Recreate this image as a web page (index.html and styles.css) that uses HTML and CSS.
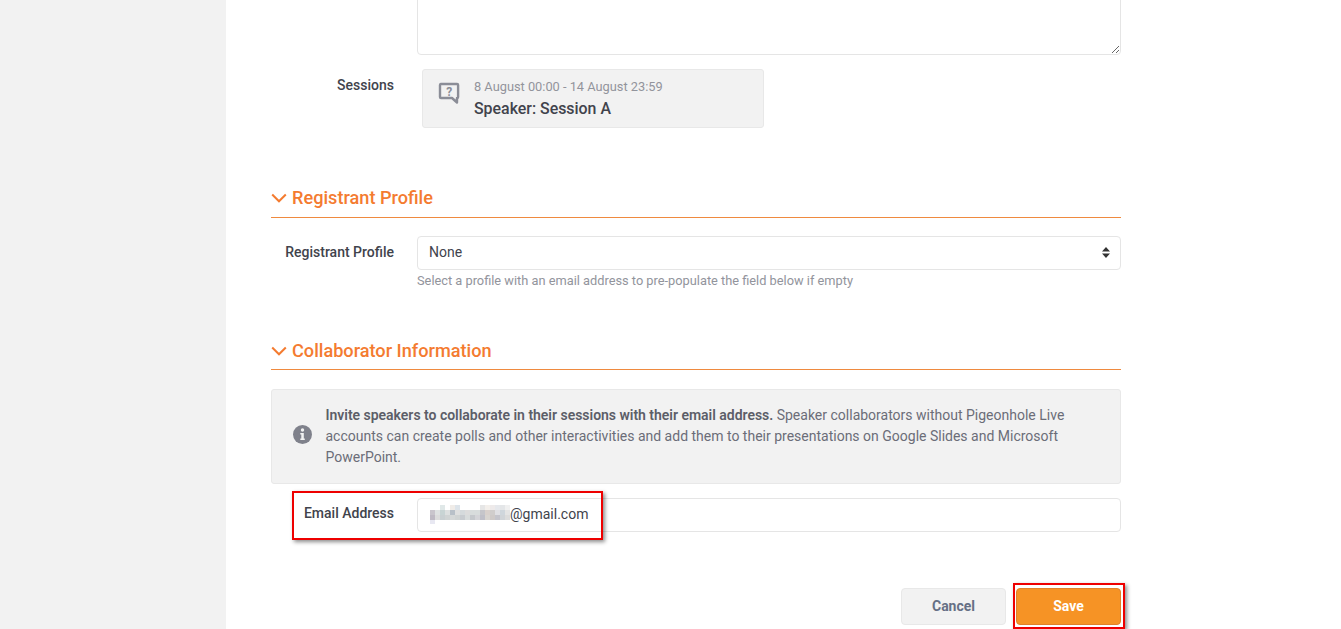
FILE: index.html
```html
<!DOCTYPE html>
<html lang="en">
<head>
<meta charset="utf-8">
<title>Edit collaborator</title>
<link rel="stylesheet" href="styles.css">
</head>
<body>
<div class="page">
  <aside class="sidebar"></aside>
  <main class="main">
    <form class="form">
      <div class="top-field"><textarea class="textarea"></textarea></div>

      <div class="row sessions-row">
        <div class="label">Sessions</div>
        <div class="session-card">
          <svg class="session-icon" width="23" height="24" viewBox="0 0 23 24" fill="none">
            <path d="M2.900 2H19.100a1 1 0 0 1 1 1v12a1 1 0 0 1-1 1H19v4.500L14 16H3a1 1 0 0 1-1-1V3a1 1 0 0 1 1-1z" stroke="#8b8d97" stroke-width="2.400" stroke-linejoin="round"/>
            <text x="11.300" y="13.500" text-anchor="middle" class="session-q">?</text>
          </svg>
          <div class="session-text">
            <div class="session-date">8 August 00:00 - 14 August 23:59</div>
            <div class="session-name">Speaker: Session A</div>
          </div>
        </div>
      </div>

      <section class="section registrant">
        <h2 class="section-title">
          <svg class="chevron" width="16" height="10" viewBox="0 0 16 10" fill="none"><path d="M1.200 1.500L8 8.300l6.800-6.800" stroke="#f47b30" stroke-width="2"/></svg>
          Registrant Profile
        </h2>
        <div class="row select-row">
          <div class="label">Registrant Profile</div>
          <div class="field">
            <div class="select-wrap">
              <select class="select"><option>None</option></select>
              <svg class="select-arrows" width="8" height="11" viewBox="0 0 8 11"><path d="M4 0l4 4.500H0zM4 11L0 6.500h8z" fill="#333"/></svg>
            </div>
            <div class="help">Select a profile with an email address to pre-populate the field below if empty</div>
          </div>
        </div>
      </section>

      <section class="section collaborator">
        <h2 class="section-title">
          <svg class="chevron" width="16" height="10" viewBox="0 0 16 10" fill="none"><path d="M1.200 1.500L8 8.300l6.800-6.800" stroke="#f47b30" stroke-width="2"/></svg>
          Collaborator Information
        </h2>
        <div class="info-box">
          <svg class="info-icon" width="19" height="19" viewBox="0 0 19 19">
            <circle cx="9.500" cy="9.500" r="9.500" fill="#7f818b"/>
            <circle cx="9.500" cy="5" r="1.700" fill="#f2f2f2"/>
            <path d="M7.300 8h3.500v5.400h1v1.500H7.300v-1.500h1v-3.900h-1z" fill="#f2f2f2"/>
          </svg>
          <p class="info-text"><strong>Invite speakers to collaborate in their sessions with their email address.</strong> Speaker collaborators without Pigeonhole Live accounts can create polls and other interactivities and add them to their presentations on Google Slides and Microsoft PowerPoint.</p>
        </div>
        <div class="row email-row">
          <div class="label">Email Address</div>
          <div class="email-input">
            <svg class="blur-name" width="80" height="19" viewBox="0 0 80 19" aria-hidden="true">
              <rect x="10" y="0" width="5" height="5" fill="#e0e8e8"/><rect x="20" y="0" width="5" height="5" fill="#f0ece8"/><rect x="25" y="0" width="5" height="5" fill="#dde4ea"/><rect x="50" y="0" width="5" height="5" fill="#e6e6e6"/><rect x="55" y="0" width="5" height="5" fill="#f3efeb"/><rect x="60" y="0" width="5" height="5" fill="#eeeaea"/><rect x="65" y="0" width="5" height="5" fill="#e6e8ec"/><rect x="70" y="0" width="5" height="5" fill="#e4e6e8"/><rect x="75" y="0" width="5" height="5" fill="#f0f0f0"/>
              <rect x="0" y="5" width="5" height="5" fill="#c9c5cc"/><rect x="5" y="5" width="5" height="5" fill="#dfe2e2"/><rect x="10" y="5" width="5" height="5" fill="#c8d4d4"/><rect x="15" y="5" width="5" height="5" fill="#dde0e0"/><rect x="20" y="5" width="5" height="5" fill="#b8c0c8"/><rect x="25" y="5" width="5" height="5" fill="#dfe0e0"/><rect x="30" y="5" width="5" height="5" fill="#d5dadc"/><rect x="35" y="5" width="5" height="5" fill="#dcdcdc"/><rect x="40" y="5" width="5" height="5" fill="#d8dcdc"/><rect x="45" y="5" width="5" height="5" fill="#d8dcdc"/><rect x="50" y="5" width="5" height="5" fill="#c5c5ca"/><rect x="55" y="5" width="5" height="5" fill="#d8d0cc"/><rect x="60" y="5" width="5" height="5" fill="#d0cdcc"/><rect x="65" y="5" width="5" height="5" fill="#e0e0e4"/><rect x="70" y="5" width="5" height="5" fill="#cfd6dc"/><rect x="75" y="5" width="5" height="5" fill="#e4e4e4"/>
              <rect x="0" y="10" width="5" height="5" fill="#bfbac4"/><rect x="5" y="10" width="5" height="5" fill="#dcdcdc"/><rect x="10" y="10" width="5" height="5" fill="#c9d0d2"/><rect x="15" y="10" width="5" height="5" fill="#d0d4d4"/><rect x="20" y="10" width="5" height="5" fill="#d5d8d8"/><rect x="25" y="10" width="5" height="5" fill="#d0d4d4"/><rect x="30" y="10" width="5" height="5" fill="#c8ccd0"/><rect x="35" y="10" width="5" height="5" fill="#d8dcdc"/><rect x="40" y="10" width="5" height="5" fill="#c5c8cc"/><rect x="45" y="10" width="5" height="5" fill="#d4d4d8"/><rect x="50" y="10" width="5" height="5" fill="#bfbfc8"/><rect x="55" y="10" width="5" height="5" fill="#d8d4d0"/><rect x="60" y="10" width="5" height="5" fill="#cfcac8"/><rect x="65" y="10" width="5" height="5" fill="#c5c5cc"/><rect x="70" y="10" width="5" height="5" fill="#d0d4d8"/><rect x="75" y="10" width="5" height="5" fill="#dcdcdc"/>
              <rect x="0" y="15" width="5" height="4" fill="#e8e8f2"/>
            </svg><span class="email-domain">@gmail.com</span>
          </div>
        </div>
      </section>

      <div class="actions">
        <button type="button" class="btn btn-cancel">Cancel</button>
        <button type="button" class="btn btn-save">Save</button>
      </div>
    </form>
  </main>
</div>
<div class="callout callout-email"></div>
<div class="callout callout-save"></div>
</body>
</html>
```

FILE: styles.css
```css
* { box-sizing: border-box; }
html, body { margin: 0; height: 629px; overflow: hidden; background: #fff; }
body { font-family: Roboto, "Liberation Sans", sans-serif; color: #41434c; font-size: 14px; position: relative; }

.page { display: flex; height: 629px; overflow: hidden; }
.sidebar { width: 226px; flex: none; background: #f2f2f2; }
.main { flex: 1; padding-left: 45px; }
.form { width: 850px; }

.top-field { padding-left: 146px; height: 55px; display: flex; align-items: flex-end; }
.textarea { display: block; width: 704px; height: 80px; flex: none; border: 1px solid #e5e5e5; border-radius: 4px; background: #fff; resize: both; margin: 0; outline: none; }

.row { display: flex; }
.label { width: 123px; flex: none; text-align: right; font-weight: 500; font-size: 14px; line-height: 20px; color: #41434c; }

.sessions-row { margin-top: 14px; }
.sessions-row .label { padding-top: 6px; }
.session-card { margin-left: 28px; width: 342px; height: 59px; background: #f2f2f2; border: 1px solid #e8e8e8; border-radius: 3px; display: flex; padding: 9px 0 0 15px; }
.session-icon { flex: none; margin-top: 3px; }
.session-q { font-family: Roboto, sans-serif; font-size: 12px; font-weight: 700; fill: #8b8d97; }
.session-text { margin-left: 13px; }
.session-date { font-size: 12.800px; line-height: 16px; color: #92949c; }
.session-name { font-size: 15.900px; font-weight: 500; line-height: 20px; margin-top: 4px; color: #41434c; }

.section-title { margin: 0; border-bottom: 1px solid #ef8a3f; display: flex; align-items: flex-start; gap: 5px; font-size: 18.150px; font-weight: 500; line-height: 24px; color: #f47b30; }
.chevron { margin-top: 7px; flex: none; }
.registrant { margin-top: 58px; }
.registrant .section-title { height: 32px; }
.collaborator { margin-top: 50px; }
.collaborator .section-title { height: 31px; }

.select-row { margin-top: 18px; }
.select-row .label { padding-top: 6px; }
.field { margin-left: 23px; width: 704px; }
.select-wrap { position: relative; }
.select { display: block; width: 100%; height: 34px; appearance: none; -webkit-appearance: none; border: 1px solid #e5e5e5; border-radius: 4px; background: #fff; padding: 0 11px 2px; font: 400 14px Roboto, sans-serif; color: #41434c; }
.select-arrows { position: absolute; right: 11px; top: 11px; }
.help { font-size: 12.800px; line-height: 16px; margin-top: 3px; color: #92949c; }

.info-box { margin-top: 19px; height: 95px; background: #f2f2f2; border: 1px solid #e8e8e8; border-radius: 3px; display: flex; align-items: center; padding: 0 40px 0 21px; }
.info-icon { flex: none; margin-bottom: 4px; }
.info-text { margin: 0 0 0 13.500px; font-size: 14px; line-height: 21px; color: #6b6d78; }
.info-text strong { font-weight: 600; letter-spacing: -0.02px; color: #5c5e68; }

.email-row { margin-top: 14px; }
.email-row .label { padding-top: 5px; }
.email-input { margin-left: 23px; width: 704px; height: 34px; border: 1px solid #e5e5e5; border-radius: 4px; display: flex; align-items: center; padding: 0 0 2px 12px; }
.blur-name { flex: none; }
.email-domain { font-size: 14px; color: #41434c; }

.actions { display: flex; justify-content: flex-end; gap: 10px; margin-top: 56px; }
.btn { width: 105px; height: 37px; border-radius: 4px; padding: 0 0 2px; font: 700 14px Roboto, sans-serif; }
.btn-cancel { background: #f2f2f2; border: 1px solid #e8e8e8; color: #667085; }
.btn-save { background: #f69325; border: 1px solid #e0802a; color: #fff; }

.callout { position: absolute; border: 2px solid #ee0000; box-shadow: 2px 2px 4px rgba(0,0,0,.45); }
.callout-email { left: 292px; top: 491px; width: 311px; height: 49px; }
.callout-save { left: 1013px; top: 583px; width: 112px; height: 46px; }
```
